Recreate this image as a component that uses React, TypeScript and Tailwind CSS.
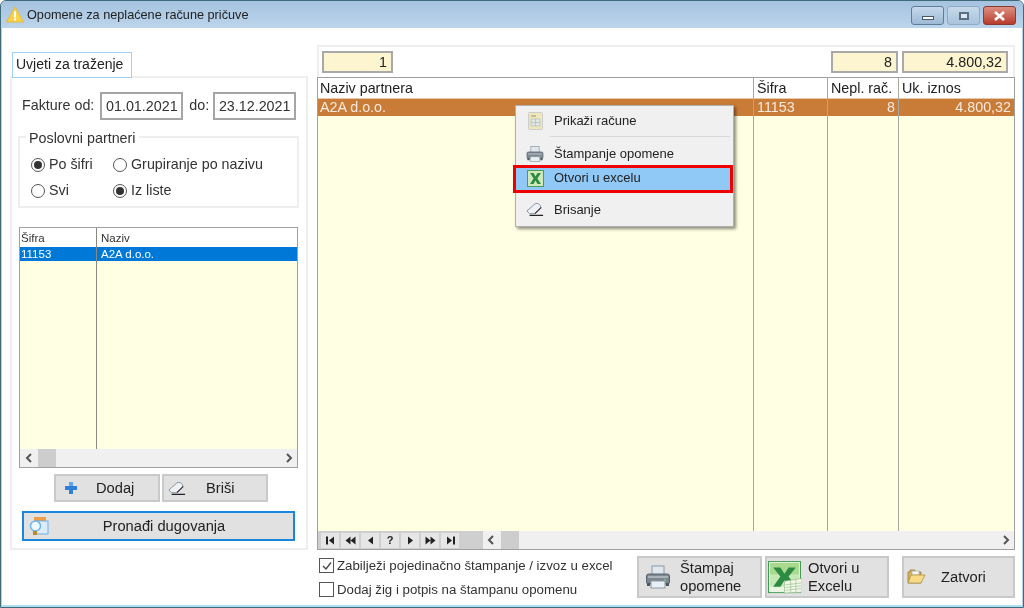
import React from "react";

const Warn = () => (
  <svg width="18" height="17" viewBox="0 0 18 17"><path d="M9 1 L17.5 16 H0.5 Z" fill="#f7d24a" stroke="#e8b93a" strokeLinejoin="round" /><rect x="8" y="5.5" width="2" height="6" fill="#fff" /><rect x="8" y="12.5" width="2" height="2" fill="#fff" /></svg>
);
const Printer = ({ s = 26 }: { s?: number }) => (
  <svg width={s} height={s} viewBox="0 0 26 26"><rect x="7" y="2" width="12" height="10" fill="#dfe8ee" stroke="#8b98a3" /><rect x="1.5" y="10" width="23" height="10" rx="2" fill="#7d8790" stroke="#5b646c" /><rect x="3" y="12" width="20" height="2" fill="#aab3ba" /><circle cx="20" cy="16" r="1" fill="#6fd36f" /><rect x="6" y="17" width="14" height="7" fill="#e9f0f5" stroke="#8b98a3" /><rect x="2" y="19" width="3" height="3" fill="#4e565d" /><rect x="21" y="19" width="3" height="3" fill="#4e565d" /></svg>
);
const ExcelBig = () => (
  <svg width="34" height="33" viewBox="0 0 33 36" preserveAspectRatio="none"><rect x="0.5" y="0.5" width="31" height="34" fill="#e8f5e0" stroke="#3f9a52" /><rect x="2" y="2" width="28" height="13" fill="#a9d98f" /><rect x="2" y="15" width="28" height="13" fill="#c6e8b4" /><path d="M5 7 H12 L16 14 L20 7 H27 L20 17 L27 28 H20 L16 21 L12 28 H5 L12 17 Z" fill="#2d8a43" /><path d="M16 22 L33 19 V34 L16 35 Z" fill="#f2f6ea" stroke="#93b98c" strokeWidth="0.7" /><path d="M17 26 L32 24 M17 29 L32 27 M17 32 L32 30 M22 21 V34 M27 20 V34" stroke="#9cc48f" strokeWidth="0.7" /></svg>
);
const ExcelSmall = () => (
  <svg width="17" height="17" viewBox="0 0 17 17"><rect x="0.5" y="0.5" width="16" height="16" fill="#cfeab8" stroke="#4a9c5a" /><path d="M3 3 H6.5 L8.5 6.5 L10.5 3 H14 L10.4 8.5 L14 14 H10.5 L8.5 10.5 L6.5 14 H3 L6.6 8.5 Z" fill="#2d8a43" /></svg>
);
const Eraser = ({ w = 18 }: { w?: number }) => (
  <svg width={w} height={w * 0.8} viewBox="0 0 20 16"><path d="M1 10 L10 2 Q12 1 14 2 L16 4 Q17 6 15 8 L9 13 H4 Z" fill="#eef2f6" stroke="#7f8b96" /><path d="M4 15 H19" stroke="#222" strokeWidth="1.4" /><path d="M10 13 L17 6" stroke="#333" strokeWidth="1.2" /></svg>
);
const Plus = () => (
  <svg width="14" height="14" viewBox="0 0 14 14"><path d="M5 1 H9 V5 H13 V9 H9 V13 H5 V9 H1 V5 H5 Z" fill="#2f7fd6" /><path d="M5 1 H9 V5 H5 Z" fill="#5ea6ea" /></svg>
);
const Find = () => (
  <svg width="20" height="20" viewBox="0 0 20 20"><rect x="5" y="1" width="12" height="4" fill="#f0a04a" /><rect x="6" y="5" width="13" height="13" fill="#d8ecfb" stroke="#6fb0e0" /><circle cx="6.5" cy="10" r="5" fill="#eef8ff" stroke="#6fb4e6" strokeWidth="1.5" /><rect x="4" y="15" width="4" height="4" fill="#b88a2e" /></svg>
);
const Doc = () => (
  <svg width="15" height="18" viewBox="0 0 15 18"><rect x="0.5" y="0.5" width="14" height="17" rx="1" fill="#f3e7b8" stroke="#c9cdd0" /><rect x="3" y="3" width="5" height="2" fill="#b9c2a0" /><rect x="3" y="7" width="9" height="7" fill="#dfe7e8" stroke="#a9b5bb" strokeWidth="0.6" /><path d="M3 10.5 H12 M7.5 7 V14" stroke="#a9b5bb" strokeWidth="0.6" /></svg>
);
const Folder = () => (
  <svg width="19" height="16" viewBox="0 0 19 16"><path d="M1 3 H3 V1 H8 V3 H14 V14 H1 Z" fill="#d9b65c" stroke="#8c7434" strokeWidth="0.7" /><rect x="5" y="2" width="7" height="4" fill="#f5f5f5" stroke="#999" strokeWidth="0.5" /><path d="M1 14 L4 6 H18 L14 14 Z" fill="#f6da86" stroke="#a88a3a" strokeWidth="0.7" /></svg>
);

const Radio = ({ on }: { on?: boolean }) => (
  <span className="flex h-[14px] w-[14px] shrink-0 items-center justify-center rounded-full border border-[#555] bg-white">
    {on && <span className="h-[8px] w-[8px] rounded-full bg-[#333]" />}
  </span>
);

const Chev = ({ left }: { left?: boolean }) => (
  <svg width="8" height="10" viewBox="0 0 8 10"><path d={left ? "M6 1 L2 5 L6 9" : "M2 1 L6 5 L2 9"} fill="none" stroke="#555" strokeWidth="2" /></svg>
);

const Btn = ({ className = "", children }: { className?: string; children: React.ReactNode }) => (
  <div className={"flex items-center border-2 border-[#c9c9c9] bg-[#e1e1e1] text-[14.7px] text-[#222] " + className}>{children}</div>
);

const NavArrow = ({ d }: { d: string }) => (
  <svg width="11" height="9" viewBox="0 0 11 9"><path d={d} fill="#222" /></svg>
);

const Nav = ({ children }: { children: React.ReactNode }) => (
  <span className="flex h-[15px] w-[18px] items-center justify-center bg-[#e6e6e6] text-[11px] font-bold leading-none text-[#222]">{children}</span>
);

const Col = ({ w, head, cell, right, last, first }: { w: string; head: string; cell: string; right?: boolean; last?: boolean; first?: boolean }) => (
  <div className={"flex h-full flex-col " + w + (last ? "" : " border-r border-[#a8a8a0]")}>
    <div className={"h-[20px] shrink-0 bg-white leading-[20px] text-[#222] " + (first ? "pl-[2px]" : "pl-[3px]")}>{head}</div>
    <div className={"h-[18px] shrink-0 border-t border-[#e8c8a8] bg-[#c97c38] leading-[17px] text-[#f6eadf] " + (first ? "px-[2px] " : "px-[3px] ") + (right ? "text-right" : "")}>{cell}</div>
    <div className="flex-1 bg-[#ffffe3]" />
  </div>
);

const Num = ({ w, children }: { w: string; children: React.ReactNode }) => (
  <div className={"h-[22px] border-2 border-[#a9a9a9] bg-[#fdf5cf] pr-[4px] text-right leading-[18px] text-[#222] " + w}>{children}</div>
);

const MenuItem = ({ icon, label, hi }: { icon: React.ReactNode; label: string; hi?: boolean }) => (
  <div className={"flex items-center " + (hi ? "h-[22px] bg-[#90c8f6] pb-[2px]" : "h-[23px]")}>
    <span className="flex w-[38px] justify-center">{icon}</span>
    <span className="text-[13px] text-[#222]">{label}</span>
  </div>
);

export default function App() {
  return (
    <div className="relative flex h-[608px] w-[1024px] flex-col overflow-hidden rounded-t-[6px] border border-[#3f6a78] bg-[#b5d0e8] text-[14.3px] blur-[0.35px] [font-family:'Liberation_Sans',Arial,sans-serif]">
      {/* title bar */}
      <div className="flex h-[27px] shrink-0 items-start bg-gradient-to-b from-[#a5c2de] to-[#bcd5ec] pl-[5px] pr-[7px]">
        <span className="mt-[5px] flex"><Warn /></span>
        <span className="ml-[3px] mt-[7px] text-[12.7px] leading-[15px] text-[#222]">Opomene za neplaćene račune pričuve</span>
        <div className="ml-auto mt-[5px] flex h-[19px] gap-[3px]">
          <div className="flex w-[33px] items-center justify-center rounded-[3px] border border-[#5f7d9a] bg-gradient-to-b from-[#c6d9ea] to-[#9db9d4]"><span className="mt-[4px] h-[4px] w-[12px] border border-[#44586c] bg-white" /></div>
          <div className="flex w-[33px] items-center justify-center rounded-[3px] border border-[#8eaac4] bg-gradient-to-b from-[#c6d9ea] to-[#a9c4dc]"><span className="h-[8px] w-[10px] border-2 border-[#5a6f84] bg-[#dfe9f2]" /></div>
          <div className="flex w-[33px] items-center justify-center rounded-[3px] border border-[#8a3a32] bg-gradient-to-b from-[#dc8f82] to-[#b63a2c]">
            <svg width="13" height="10" viewBox="0 0 13 10"><path d="M2 1 L11 9 M11 1 L2 9" stroke="#fff" strokeWidth="2.6" /></svg>
          </div>
        </div>
      </div>
      {/* body */}
      <div className="mx-[1px] flex min-h-0 flex-1 border-b-2 border-[#a9dff0] bg-white pl-[8px]">
        {/* left */}
        <div className="flex w-[298px] shrink-0 flex-col pt-[24px]">
          <div className="z-10 -mb-[2px] ml-[2px] h-[26px] w-[120px] border border-[#9fd0f5] bg-white pl-[3px] text-[14px] leading-[23px] text-[#222]">Uvjeti za traženje</div>
          <div className="flex h-[474px] flex-col border-2 border-[#eeeeee] px-[8px]">
            <div className="mt-[14px] flex items-center text-[#333]">
              <span className="ml-[2px]">Fakture od:</span>
              <div className="ml-[6px] h-[28px] w-[83px] border-2 border-[#a5a5a5] text-center leading-[24px]">01.01.2021</div>
              <span className="ml-[6px]">do:</span>
              <div className="ml-[4px] h-[28px] w-[83px] border-2 border-[#a5a5a5] text-center leading-[24px]">23.12.2021</div>
            </div>
            <div className="relative ml-[-2px] mt-[16px] h-[72px] w-[281px] border-2 border-[#eeeeee]">
              <span className="absolute left-[6px] top-[-8px] bg-white px-[3px] leading-[16px] text-[#333]">Poslovni partneri</span>
              <div className="grid h-full grid-cols-[82px_1fr] content-start gap-y-[10px] pl-[11px] pt-[19px] text-[#333]">
                <div className="flex h-[16px] items-center gap-[4px]"><Radio on /><span>Po šifri</span></div>
                <div className="flex h-[16px] items-center gap-[4px]"><Radio /><span>Grupiranje po nazivu</span></div>
                <div className="flex h-[16px] items-center gap-[4px]"><Radio /><span>Svi</span></div>
                <div className="flex h-[16px] items-center gap-[4px]"><Radio on /><span>Iz liste</span></div>
              </div>
            </div>
            {/* list */}
            <div className="ml-[-1px] mt-[19px] flex h-[241px] w-[279px] flex-col border border-[#a0a0a0] text-[11.5px]">
              <div className="flex min-h-0 flex-1">
                <div className="flex w-[77px] flex-col border-r border-[#8a8a80]">
                  <div className="h-[19px] bg-white pl-[1px] pt-[4px] leading-[13px] text-[#333]">Šifra</div>
                  <div className="h-[14px] bg-[#0078d7] pl-[1px] leading-[14px] text-white">11153</div>
                  <div className="flex-1 bg-[#ffffe3]" />
                </div>
                <div className="flex flex-1 flex-col">
                  <div className="h-[19px] bg-white pl-[4px] pt-[4px] leading-[13px] text-[#333]">Naziv</div>
                  <div className="h-[14px] bg-[#0078d7] pl-[4px] leading-[14px] text-white">A2A d.o.o.</div>
                  <div className="flex-1 bg-[#ffffe3]" />
                </div>
              </div>
              <div className="flex h-[18px] shrink-0 items-center bg-[#f0f0f0] pl-[5px] pr-[4px]">
                <Chev left />
                <span className="ml-[5px] h-full w-[18px] bg-[#cdcdcd]" />
                <span className="ml-auto"><Chev /></span>
              </div>
            </div>
            {/* add/delete */}
            <div className="ml-[34px] mt-[6px] flex gap-[2px]">
              <Btn className="h-[28px] w-[106px] pl-[8px]"><Plus /><span className="ml-[18px]">Dodaj</span></Btn>
              <Btn className="h-[28px] w-[106px] pl-[4px]"><Eraser /><span className="ml-[20px]">Briši</span></Btn>
            </div>
            <div className="ml-[2px] mt-[9px] flex h-[30px] w-[273px] items-center border-2 border-[#1a86dc] bg-[#e1e1e1] pl-[5px] text-[14.7px] text-[#222]">
              <Find />
              <span className="flex-1 pr-[14px] text-center">Pronađi dugovanja</span>
            </div>
          </div>
        </div>
        {/* right */}
        <div className="ml-[9px] flex w-[698px] shrink-0 flex-col pt-[17px]">
          <div className="flex h-[32px] shrink-0 items-center border-2 border-b-0 border-[#eeeeee] pl-[3px] pr-[5px]">
            <Num w="w-[71px]">1</Num>
            <Num w="ml-auto w-[67px]">8</Num>
            <Num w="ml-[4px] w-[106px]">4.800,32</Num>
          </div>
          <div className="flex h-[473px] shrink-0 flex-col border border-[#a0a0a0]">
            <div className="flex min-h-0 flex-1">
              <Col first w="w-[436px]" head="Naziv partnera" cell="A2A d.o.o." />
              <Col w="w-[74px]" head="Šifra" cell="11153" />
              <Col w="w-[71px]" head="Nepl. rač." cell="8" right />
              <Col w="flex-1" head="Uk. iznos" cell="4.800,32" right last />
            </div>
            <div className="flex h-[18px] shrink-0 items-center bg-[#f0f0f0]">
              <div className="flex h-full w-[165px] items-center gap-[2px] bg-[#cfcfcf] pl-[3px]">
                <Nav><NavArrow d="M1 0.5 H3 V8.5 H1 Z M9 0.5 V8.5 L4 4.5 Z" /></Nav>
                <Nav><NavArrow d="M5.5 0.5 V8.5 L0.5 4.5 Z M10.5 0.5 V8.5 L5.5 4.5 Z" /></Nav>
                <Nav><NavArrow d="M8 0.5 V8.5 L3 4.5 Z" /></Nav>
                <Nav>?</Nav>
                <Nav><NavArrow d="M3 0.5 V8.5 L8 4.5 Z" /></Nav>
                <Nav><NavArrow d="M0.5 0.5 V8.5 L5.5 4.5 Z M5.5 0.5 V8.5 L10.5 4.5 Z" /></Nav>
                <Nav><NavArrow d="M2 0.5 V8.5 L7 4.5 Z M8 0.5 H10 V8.5 H8 Z" /></Nav>
              </div>
              <span className="ml-[4px]"><Chev left /></span>
              <span className="ml-[6px] h-full w-[18px] bg-[#cdcdcd]" />
              <span className="ml-auto mr-[4px]"><Chev /></span>
            </div>
          </div>
          {/* bottom */}
          <div className="flex min-h-0 flex-1 pl-[1px] pt-[6px]">
            <div className="flex w-[319px] flex-col gap-[9px] pl-[1px] pt-[2px] text-[13.25px] text-[#333]">
              <div className="flex h-[15px] items-center gap-[3px]">
                <span className="flex h-[15px] w-[15px] shrink-0 items-center justify-center border border-[#555] bg-white"><svg width="12" height="12" viewBox="0 0 12 12"><path d="M2 6 L5 9 L10 2.5" fill="none" stroke="#444" strokeWidth="1.3" /></svg></span>
                <span className="whitespace-nowrap">Zabilježi pojedinačno štampanje / izvoz u excel</span>
              </div>
              <div className="flex h-[15px] items-center gap-[3px]">
                <span className="h-[15px] w-[15px] shrink-0 border border-[#555] bg-white" />
                <span className="whitespace-nowrap">Dodaj žig i potpis na štampanu opomenu</span>
              </div>
            </div>
            <Btn className="h-[42px] w-[125px] pl-[6px]"><Printer /><span className="ml-[9px] leading-[18px]">Štampaj<br />opomene</span></Btn>
            <Btn className="ml-[3px] h-[42px] w-[124px] pl-[1px]"><ExcelBig /><span className="ml-[6px] leading-[18px]">Otvori u<br />Excelu</span></Btn>
            <Btn className="ml-[13px] h-[42px] w-[113px] pl-[3px]"><Folder /><span className="ml-[15px]">Zatvori</span></Btn>
          </div>
        </div>
      </div>
      {/* context menu */}
      <div className="absolute left-[514px] top-[104px] flex h-[122px] w-[219px] flex-col border border-[#b0b0b0] bg-[#f0f0f0] shadow-[2px_2px_3px_rgba(0,0,0,0.45)]">
        <div className="mt-[3px]"><MenuItem icon={<Doc />} label="Prikaži račune" /></div>
        <div className="ml-[34px] mr-[3px] mt-[4px] h-[1px] bg-[#d8d8d8]" />
        <div className="mt-[5px]"><MenuItem icon={<Printer s={18} />} label="Štampanje opomene" /></div>
        <div className="mr-[3px] mt-[3px] outline-3 outline-[#ee0000]"><MenuItem hi icon={<ExcelSmall />} label="Otvori u excelu" /></div>
        <div className="mt-[8px]"><MenuItem icon={<Eraser />} label="Brisanje" /></div>
      </div>
    </div>
  );
}
